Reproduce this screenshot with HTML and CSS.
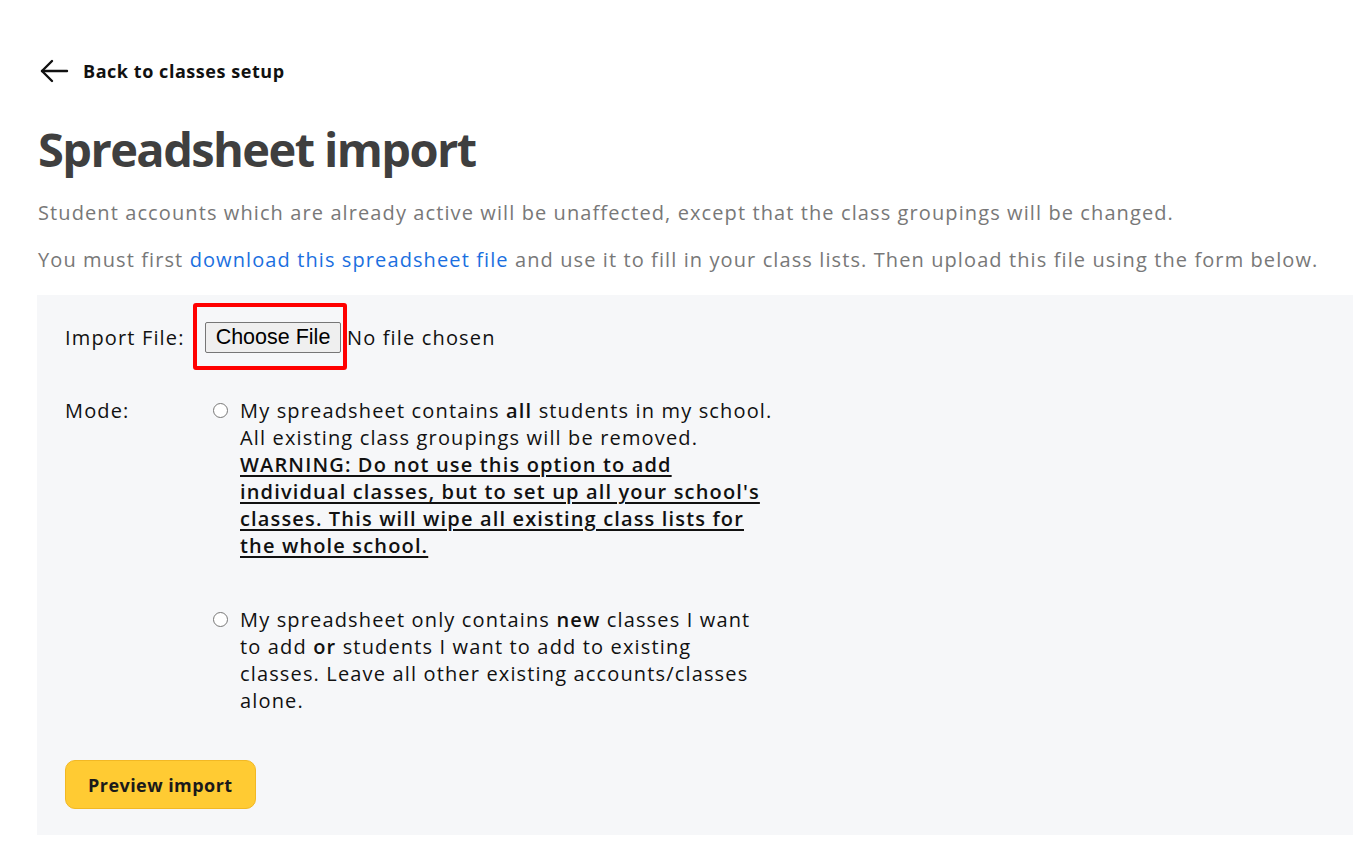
FILE: index.html
```html
<!DOCTYPE html>
<html lang="en">
<head>
  <meta charset="UTF-8">
  <meta name="viewport" content="width=device-width, initial-scale=1.0">
  <title>Spreadsheet import</title>
  <link rel="stylesheet" href="styles.css">
</head>
<body>

  <main class="page">
    <a class="back-link" href="#">
      <svg class="back-icon" width="30" height="24" viewBox="0 0 30 24" fill="none" stroke="#111" stroke-width="2.4" stroke-linecap="round" stroke-linejoin="round">
        <path d="M28 12H3"/>
        <path d="M13 2L3 12l10 10"/>
      </svg>
      <span>Back to classes setup</span>
    </a>

    <h1 class="page-title">Spreadsheet import</h1>

    <p class="intro">Student accounts which are already active will be unaffected, except that the class groupings will be changed.</p>
    <p class="intro">You must first <a href="#">download this spreadsheet file</a> and use it to fill in your class lists. Then upload this file using the form below.</p>

    <form class="import-panel">
      <div class="file-row">
        <label for="import-file">Import File:</label>
        <span class="file-picker">
          <button type="button" id="import-file" class="file-button">Choose File</button>
        </span>
        <span class="file-status">No file chosen</span>
      </div>

      <div class="mode-row">
        <span class="mode-label">Mode:</span>
        <div class="mode-options">
          <label class="mode-option">
            <input type="radio" name="mode" value="replace">
            <span>My spreadsheet contains <b>all</b> students in my school.<br>
              All existing class groupings will be removed.<br>
              <strong class="warning">WARNING: Do not use this option to add<br>
              individual classes, but to set up all your school's<br>
              classes. This will wipe all existing class lists for<br>
              the whole school.</strong></span>
          </label>
          <label class="mode-option">
            <input type="radio" name="mode" value="add">
            <span>My spreadsheet only contains <b>new</b> classes I want<br>
              to add <b>or</b> students I want to add to existing<br>
              classes. Leave all other existing accounts/classes<br>
              alone.</span>
          </label>
        </div>
      </div>

      <button type="submit" class="preview-button">Preview import</button>
    </form>
  </main>

</body>
</html>
```

FILE: styles.css
```css
body {
  margin: 0;
  font-family: "Open Sans", sans-serif;
  color: #111;
  background-color: #fff;
}

.page {
  padding: 56px 0 26px 37px;
}

.back-link {
  display: flex;
  align-items: center;
  gap: 14px;
  margin-left: 2px;
  color: #111;
  font-size: 18px;
  font-weight: 700;
  letter-spacing: 0.55px;
  text-decoration: none;
  line-height: 30px;
}

.page-title {
  margin: 33px 0 20px 1px;
  font-size: 47px;
  font-weight: 700;
  line-height: 60px;
  letter-spacing: -1.6px;
  color: #3f3f3f;
}

.intro {
  margin: 0 0 20px 1px;
  font-size: 20px;
  line-height: 27px;
  color: #787878;
  letter-spacing: 1.1px;
}

.intro a {
  color: #1b6fe0;
  text-decoration: none;
}

.import-panel {
  margin-top: 22px;
  padding: 27px 28px 26px;
  background-color: #f6f7f9;
  font-size: 20px;
  line-height: 27px;
  letter-spacing: 1.15px;
}

.import-panel b,
.warning {
  font-weight: 600;
}

.file-row {
  display: flex;
  align-items: center;
}

.file-row label {
  width: 140px;
}

.file-picker {
  position: relative;
  display: inline-block;
}

/* red highlight drawn round the picker button */
.file-picker::after {
  content: "";
  position: absolute;
  left: -12px;
  right: -6px;
  top: -19px;
  bottom: -17px;
  border: 4px solid #f00;
  border-radius: 3px;
}

.file-button {
  width: 136px;
  height: 31px;
  padding: 0;
  font-family: "Liberation Sans", Arial, sans-serif;
  font-size: 21.5px;
  color: #000;
  background-color: #efefef;
  border: 1px solid #767676;
  border-radius: 2px;
}

.file-status {
  margin-left: 6px;
}

.mode-row {
  display: flex;
  margin-top: 44px;
}

.mode-label {
  width: 148px;
}

.mode-options {
  display: flex;
  flex-direction: column;
  gap: 47px;
  width: 600px;
}

.mode-option {
  display: flex;
  align-items: flex-start;
}

.mode-option input {
  flex: none;
  width: 15px;
  height: 15px;
  margin: 6px 12px 0 0;
}

.warning {
  text-decoration: underline;
  text-underline-offset: 3px;
}

.preview-button {
  margin-top: 46px;
  height: 49px;
  padding: 0 22px;
  font-family: "Open Sans", sans-serif;
  font-size: 18px;
  font-weight: 700;
  letter-spacing: 0.45px;
  color: #1a1a1a;
  background-color: #ffcb33;
  border: 1px solid #f2b824;
  border-radius: 10px;
  cursor: pointer;
}
```
